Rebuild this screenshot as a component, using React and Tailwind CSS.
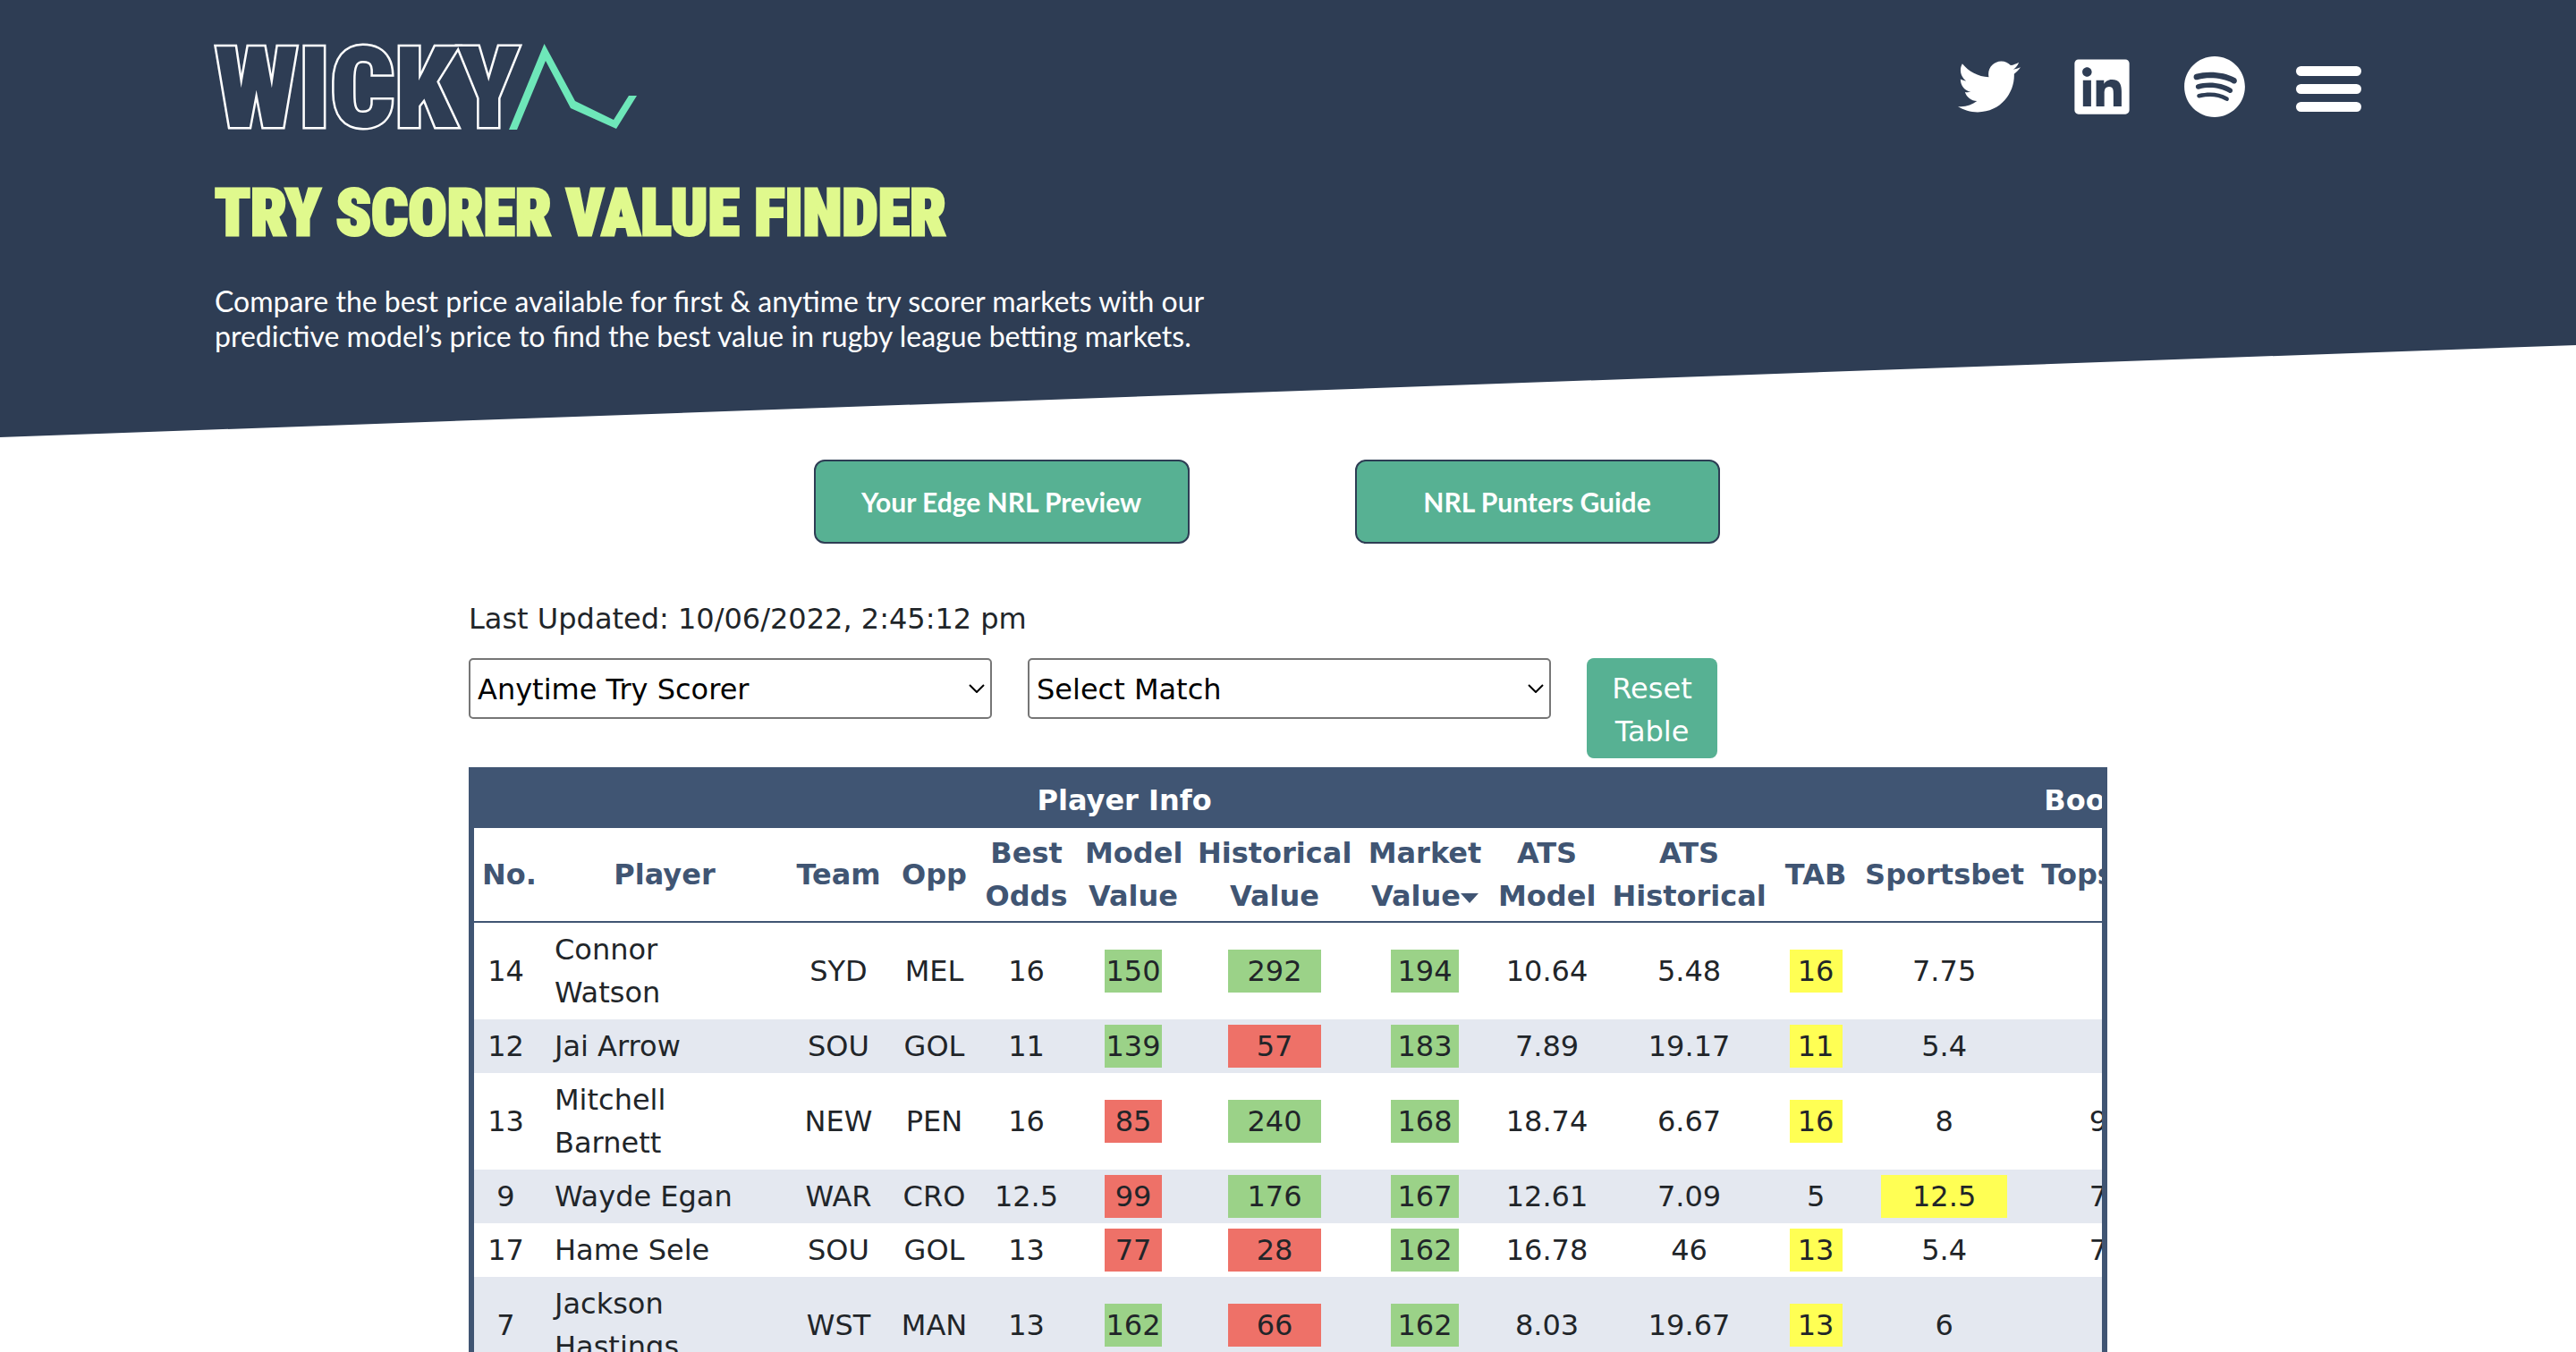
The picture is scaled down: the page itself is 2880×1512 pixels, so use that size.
import { FaTwitter, FaLinkedin, FaSpotify } from "react-icons/fa";

const columns = [
  { key: "no", label: "No.", width: "w-[79px]" },
  { key: "player", label: "Player", width: "w-[268px]" },
  { key: "team", label: "Team", width: "w-[121px]" },
  { key: "opp", label: "Opp", width: "w-[93px]" },
  { key: "best", label: "Best Odds", width: "w-[113px]" },
  { key: "model", label: "Model Value", width: "w-[126px]" },
  { key: "historical", label: "Historical Value", width: "w-[190px]" },
  { key: "market", label: "Market Value", width: "w-[146px]", sorted: true },
  { key: "atsModel", label: "ATS Model", width: "w-[127px]" },
  { key: "atsHistorical", label: "ATS Historical", width: "w-[191px]" },
  { key: "tab", label: "TAB", width: "w-[92px]" },
  { key: "sportsbet", label: "Sportsbet", width: "w-[195px]" },
  { key: "topsport", label: "Topsport", width: "w-[180px]" },
  { key: "other", label: "", width: "w-[357px]" },
];

const rows = [
  { no: 14, player: "Connor Watson", team: "SYD", opp: "MEL", best: 16, model: 150, historical: 292, market: 194, atsModel: "10.64", atsHistorical: "5.48", tab: 16, sportsbet: 7.75 },
  { no: 12, player: "Jai Arrow", team: "SOU", opp: "GOL", best: 11, model: 139, historical: 57, market: 183, atsModel: "7.89", atsHistorical: "19.17", tab: 11, sportsbet: 5.4 },
  { no: 13, player: "Mitchell Barnett", team: "NEW", opp: "PEN", best: 16, model: 85, historical: 240, market: 168, atsModel: "18.74", atsHistorical: "6.67", tab: 16, sportsbet: 8, topsport: 9.5 },
  { no: 9, player: "Wayde Egan", team: "WAR", opp: "CRO", best: 12.5, model: 99, historical: 176, market: 167, atsModel: "12.61", atsHistorical: "7.09", tab: 5, sportsbet: 12.5, topsport: 7.5 },
  { no: 17, player: "Hame Sele", team: "SOU", opp: "GOL", best: 13, model: 77, historical: 28, market: 162, atsModel: "16.78", atsHistorical: "46", tab: 13, sportsbet: 5.4, topsport: 7.5 },
  { no: 7, player: "Jackson Hastings", team: "WST", opp: "MAN", best: 13, model: 162, historical: 66, market: 162, atsModel: "8.03", atsHistorical: "19.67", tab: 13, sportsbet: 6 },
];

const valueKeys = ["model", "historical", "market"];
const bookKeys = ["tab", "sportsbet", "topsport"];

function Logo() {
  return (
    <a href="#home" aria-label="Wicky home" className="block">
      <svg viewBox="0 0 476 100" className="h-[100px] w-[476px] overflow-visible">
        <text
          x="0"
          y="94"
          fill="#2e3d54"
          stroke="#ffffff"
          strokeWidth="5"
          paintOrder="stroke"
          className="font-['Roboto_Condensed',Roboto,sans-serif] text-[126px] font-black"
        >
          WICKY
        </text>
        <path
          d="M329 97 L368.500 1 L403 65 L446 86 L463 59 L472 59 L449 96 L398 73 L370 20 L338 97 Z"
          fill="#6ee7b9"
        />
      </svg>
    </a>
  );
}

function Dropdown({ id, label, options }) {
  return (
    <div className="relative h-[68px] w-[585px]">
      <label htmlFor={id} className="sr-only">{label}</label>
      <select
        id={id}
        className="h-full w-full appearance-none rounded-[5px] border-2 border-[#767676] bg-white pl-2 pr-10 pt-0.5 text-[32px] text-black"
      >
        {options.map((o) => (
          <option key={o}>{o}</option>
        ))}
      </select>
      <svg
        viewBox="0 0 18 10"
        className="pointer-events-none absolute right-2 top-[29px] h-[10px] w-[18px]"
        fill="none"
        stroke="#000"
        strokeWidth="2"
      >
        <path d="M1 1 L9 9 L17 1" />
      </svg>
    </div>
  );
}

function Cell({ name, row }) {
  const value = row[name];
  if (name === "player") {
    return (
      <td className="py-1.5 pl-[11px] pr-[100px]">
        <span className={value.length > 10 ? "block w-[140px]" : "block whitespace-nowrap"}>{value}</span>
      </td>
    );
  }
  if (name === "no") {
    return <td className="py-1.5 pl-1 pr-3 text-center">{value}</td>;
  }
  let mark = "";
  if (valueKeys.includes(name)) {
    mark = value >= 100 ? "mx-auto w-3/5 bg-[#9bd288]" : "mx-auto w-3/5 bg-[#ee7168]";
  } else if (bookKeys.includes(name) && value === row.best) {
    mark = "mx-auto w-4/5 bg-[#ffff54]";
  }
  return (
    <td className="px-[9px] py-1.5 text-center">
      <span className={"block whitespace-nowrap " + mark}>{value}</span>
    </td>
  );
}

export default function App() {
  return (
    <div className="h-screen overflow-hidden bg-white font-['DejaVu_Sans',sans-serif] text-[32px] leading-[48px] text-[#212529]">
      <header className="relative h-[489px] px-60 pt-12 font-['Lato',sans-serif] text-white">
        <div
          aria-hidden="true"
          className="absolute inset-0 bg-[#2e3d54] [clip-path:polygon(0_0,100%_0,100%_386px,0_100%)]"
        />
        <div className="relative">
          <div className="flex items-start justify-between">
            <Logo />
            <nav className="mt-[14px] flex items-center gap-14 text-[70px]">
              <a href="#twitter" aria-label="Twitter"><FaTwitter /></a>
              <a href="#linkedin" aria-label="LinkedIn"><FaLinkedin /></a>
              <a href="#spotify" aria-label="Spotify"><FaSpotify /></a>
              <button type="button" aria-label="Menu" className="mt-1 flex w-[73px] flex-col gap-[9px]">
                <span className="h-[11px] rounded-full bg-white" />
                <span className="h-[11px] rounded-full bg-white" />
                <span className="h-[11px] rounded-full bg-white" />
              </button>
            </nav>
          </div>
          <h1 className="mt-[51px] font-['Roboto_Condensed',Roboto,sans-serif] text-[72px] font-black leading-[80px] text-[#e0f98d] [-webkit-text-stroke:3px_#e0f98d]">
            TRY SCORER VALUE FINDER
          </h1>
          <p className="mt-[38px] max-w-[1140px] leading-[39px]">
            Compare the best price available for first &amp; anytime try scorer markets with our
            predictive model’s price to find the best value in rugby league betting markets.
          </p>
        </div>
      </header>

      <main>
        <div className="mt-[25px] flex justify-center gap-[185px] pr-12 font-['Lato',sans-serif] text-[30px] font-bold text-white">
          <a href="#preview" className="flex h-[94px] w-[420px] items-center justify-center rounded-xl border-2 border-[#2e3d54] bg-[#57b193]">
            Your Edge NRL Preview
          </a>
          <a href="#guide" className="flex h-[94px] w-[408px] items-center justify-center rounded-xl border-2 border-[#2e3d54] bg-[#57b193]">
            NRL Punters Guide
          </a>
        </div>

        <section className="mx-auto mt-[60px] w-full max-w-[1832px]">
          <p>Last Updated: 10/06/2022, 2:45:12 pm</p>
          <div className="mt-5 flex items-start gap-10">
            <Dropdown id="market" label="Market" options={["Anytime Try Scorer", "First Try Scorer"]} />
            <Dropdown id="match" label="Match" options={["Select Match"]} />
            <button type="button" className="w-[146px] rounded-lg bg-[#57b193] px-4 pb-1.5 pt-2.5 text-center text-white">
              Reset Table
            </button>
          </div>

          <div className="mt-[10px] overflow-x-hidden border-[6px] border-[#405573]">
            <table className="w-[2278px] table-fixed border-collapse">
              <colgroup>
                {columns.map((c) => (
                  <col key={c.key} className={c.width} />
                ))}
              </colgroup>
              <thead>
                <tr className="bg-[#405573] text-white">
                  <th colSpan={10} className="py-[7px]">Player Info</th>
                  <th colSpan={4} className="py-[7px]">Bookmakers</th>
                </tr>
                <tr className="border-b-2 border-[#405573] text-[#405573]">
                  {columns.map((c) => (
                    <th key={c.key} className="px-[9px] py-1">
                      {c.label}
                      {c.sorted && (
                        <svg viewBox="0 0 20 11" className="inline-block h-[11px] w-[20px] align-middle" fill="currentColor">
                          <path d="M0 0 H20 L10 11 Z" />
                        </svg>
                      )}
                    </th>
                  ))}
                </tr>
              </thead>
              <tbody>
                {rows.map((r) => (
                  <tr key={r.player} className="even:bg-[#e4e8f0]">
                    {columns.map((c) => (
                      <Cell key={c.key} name={c.key} row={r} />
                    ))}
                  </tr>
                ))}
              </tbody>
            </table>
          </div>
        </section>
      </main>
    </div>
  );
}
